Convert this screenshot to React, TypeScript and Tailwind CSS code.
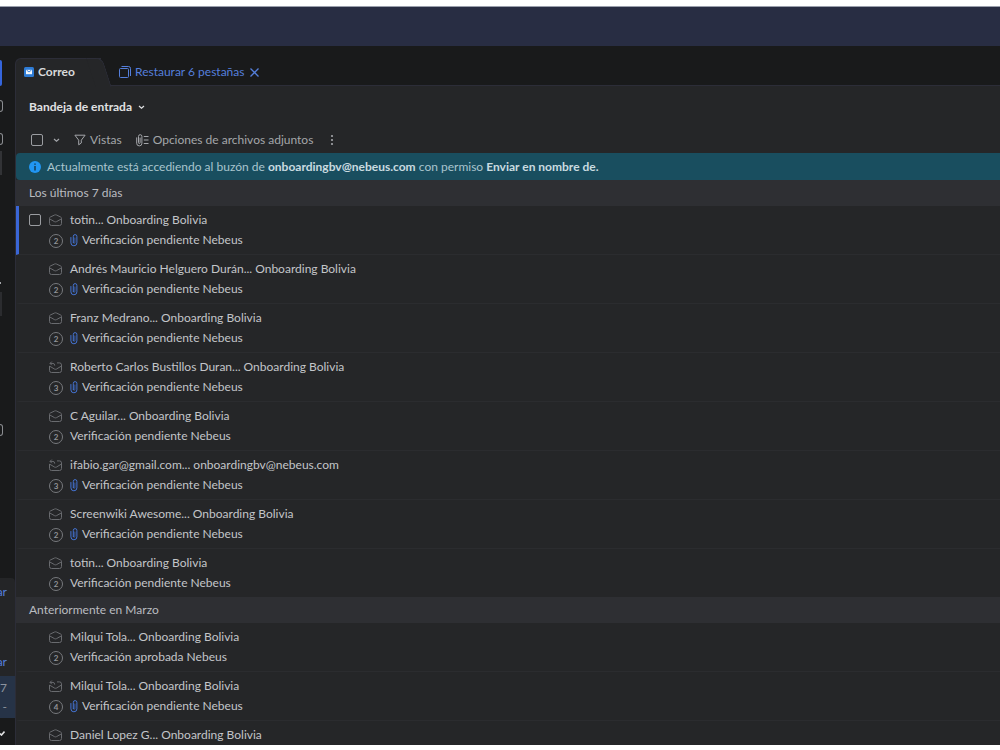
import { ReactNode } from 'react';
import clsx from 'clsx';

interface IThread {
   id: number;
   people: string;
   subject?: string;
   count?: number;
   replied?: boolean;
   attachment?: boolean;
   active?: boolean;
}

interface IThreadGroup {
   title: string;
   threads: IThread[];
}

const PENDING = 'Verificación pendiente Nebeus';

const groups: IThreadGroup[] = [
   {
      title: 'Los últimos 7 días',
      threads: [
         { id: 1, people: 'totin... Onboarding Bolivia', subject: PENDING, count: 2, attachment: true, active: true },
         { id: 2, people: 'Andrés Mauricio Helguero Durán... Onboarding Bolivia', subject: PENDING, count: 2, attachment: true },
         { id: 3, people: 'Franz Medrano... Onboarding Bolivia', subject: PENDING, count: 2, attachment: true },
         { id: 4, people: 'Roberto Carlos Bustillos Duran... Onboarding Bolivia', subject: PENDING, count: 3, attachment: true, replied: true },
         { id: 5, people: 'C Aguilar... Onboarding Bolivia', subject: PENDING, count: 2 },
         { id: 6, people: 'ifabio.gar@gmail.com... onboardingbv@nebeus.com', subject: PENDING, count: 3, attachment: true, replied: true },
         { id: 7, people: 'Screenwiki Awesome... Onboarding Bolivia', subject: PENDING, count: 2, attachment: true },
         { id: 8, people: 'totin... Onboarding Bolivia', subject: PENDING, count: 2 },
      ],
   },
   {
      title: 'Anteriormente en Marzo',
      threads: [
         { id: 9, people: 'Milqui Tola... Onboarding Bolivia', subject: 'Verificación aprobada Nebeus', count: 2 },
         { id: 10, people: 'Milqui Tola... Onboarding Bolivia', subject: PENDING, count: 4, attachment: true, replied: true },
         { id: 11, people: 'Daniel Lopez G... Onboarding Bolivia' },
      ],
   },
];

export default function App() {
   return (
      <div className="flex h-screen flex-col overflow-hidden bg-white pt-1.5 pb-[5px] font-['Lato',sans-serif] text-xs leading-5 text-[#c3c5c9]">
         <header className="h-10 shrink-0 border-t border-[#9a9fac] bg-[#282d43]" />
         <div className="flex min-h-0 flex-1 bg-[#191a1b]">
            <Sidebar />
            <div className="flex min-w-0 flex-1 flex-col">
               <TabBar />
               <main className="flex min-h-0 flex-1 flex-col border-l border-[#2c2d38] bg-[#252628]">
                  <div className="px-[13px] pt-[11px] pb-2.5">
                     <button className="flex items-center gap-1.5 font-bold text-[#e0e1e3]">
                        Bandeja de entrada
                        <ChevronIcon />
                     </button>
                  </div>
                  <Toolbar />
                  <p className="flex h-[27px] shrink-0 items-center gap-1.5 rounded-l-sm bg-[#194e5f] px-[13px] text-[#a9c5ce]">
                     <InfoIcon />
                     <span>
                        Actualmente está accediendo al buzón de{' '}
                        <b className="text-[#c9dbe0]">onboardingbv@nebeus.com</b>{' '}
                        con permiso{' '}
                        <b className="text-[#c9dbe0]">Enviar en nombre de.</b>
                     </span>
                  </p>
                  <div className="min-h-0 flex-1 overflow-hidden">
                     {groups.map((group) => (
                        <section key={group.title}>
                           <h2 className="bg-[#2e2f33] px-[13px] py-[3px] text-[#babcc0]">
                              {group.title}
                           </h2>
                           <ul className="divide-y divide-[#2b2c2f]">
                              {group.threads.map((thread) => (
                                 <ThreadRow key={thread.id} thread={thread} />
                              ))}
                           </ul>
                        </section>
                     ))}
                  </div>
               </main>
            </div>
         </div>
      </div>
   );
}

function TabBar() {
   return (
      <nav className="flex h-10 shrink-0 items-end border-b border-[#2c2d38]">
         <a
            href="#correo"
            className="relative -mb-px flex h-7 w-[86px] items-center gap-1 rounded-tl-md border-t border-l border-[#2c2d38] bg-[#252628] pb-0.5 pl-2 font-bold text-[#d9dadc] after:absolute after:-top-px after:-right-1.5 after:-bottom-px after:w-4 after:skew-x-[18deg] after:rounded-tr-md after:border-t after:border-r after:border-[#2c2d38] after:bg-[#252628] after:content-['']"
         >
            <MailTabIcon />
            Correo
         </a>
         <button className="ml-[18px] flex h-[26px] items-center gap-1 text-[#557fdb]">
            <TabsIcon />
            Restaurar 6 pestañas
         </button>
         <button aria-label="Cerrar" className="ml-1.5 flex h-[26px] items-center text-[#557fdb]">
            <svg width="9" height="9" viewBox="0 0 9 9" fill="none" stroke="currentColor" strokeWidth="1.3">
               <path d="M.5.5l8 8M8.5.5l-8 8" />
            </svg>
         </button>
      </nav>
   );
}

function Toolbar() {
   return (
      <div className="flex h-[26px] shrink-0 items-center pl-[15px] text-[#a4a6aa]">
         <Checkbox label="Seleccionar todo" />
         <button aria-label="Opciones de selección" className="ml-2.5">
            <ChevronIcon />
         </button>
         <button className="ml-3.5 flex items-center gap-1">
            <FilterIcon />
            Vistas
         </button>
         <button className="ml-3.5 flex items-center gap-1">
            <AttachmentOptionsIcon />
            Opciones de archivos adjuntos
         </button>
         <button aria-label="Más" className="ml-4">
            <svg width="6" height="12" viewBox="0 0 6 12" fill="currentColor">
               <circle cx="3" cy="2" r="1.1" />
               <circle cx="3" cy="6" r="1.1" />
               <circle cx="3" cy="10" r="1.1" />
            </svg>
         </button>
      </div>
   );
}

function ThreadRow({ thread }: { thread: IThread }) {
   return (
      <li
         className={clsx(
            'flex border-l-3 pt-1 pb-1',
            thread.active ? 'border-l-[#3a66d6]' : 'border-l-transparent'
         )}
      >
         <div className="flex h-5 w-[30px] items-center pl-2.5">
            {thread.active && <Checkbox label={thread.people} />}
         </div>
         <div className="grid grid-cols-[21px_1fr] items-center">
            <EnvelopeIcon replied={thread.replied} />
            <span>{thread.people}</span>
            {thread.subject && (
               <>
                  <span className="mt-px flex size-[14px] items-center justify-center rounded-full border border-[#77797d] text-[8px] leading-3 font-bold text-[#929498]">
                     {thread.count}
                  </span>
                  <span className="flex items-center gap-1">
                     {thread.attachment && <ClipIcon />}
                     {thread.subject}
                  </span>
               </>
            )}
         </div>
      </li>
   );
}

function Checkbox({ label }: { label: string }) {
   return (
      <input
         type="checkbox"
         aria-label={label}
         className="size-3 appearance-none rounded-xs border border-[#9b9da1]"
      />
   );
}

// Only the right edge of the sidebar is visible, the rest stays off screen
function Sidebar() {
   return (
      <aside className="flex w-[15px] shrink-0 flex-col overflow-hidden pt-3.5 text-[#557fdb]">
         <div className="h-[26px] w-0.5 rounded-r-sm bg-[#3565dc]" />
         <SidebarBox className="mt-3.5" />
         <SidebarBox className="mt-[21px]" />
         <div className="mt-1.5 h-6 w-0.5 bg-[#323336]" />
         <div className="mt-[107px] h-0.5 w-px bg-[#a4a6aa]" />
         <div className="mt-2 h-6 w-0.5 bg-[#2b2c2f]" />
         <SidebarBox className="mt-[108px]" />
         <div className="mt-auto rounded-tr-sm bg-[#242527]">
            <SidebarText className="h-[50px] pt-1">ar</SidebarText>
            <SidebarText className="h-12 pt-6">ar</SidebarText>
            <div className="h-[42px] bg-[#263347] text-[#8d949f]">
               <SidebarText className="h-[21px] pt-0.5">7</SidebarText>
               <SidebarText className="h-[21px]">-</SidebarText>
            </div>
         </div>
         <div className="h-[27px] shrink-0 pt-3 text-[#e0e1e3]">
            <svg width="5" height="6" viewBox="0 0 5 6" fill="none" stroke="currentColor" strokeWidth="1.6">
               <path d="M0 3.5L1.5 5L4.5 1.5" />
            </svg>
         </div>
      </aside>
   );
}

function SidebarBox({ className }: { className: string }) {
   return (
      <div
         className={clsx('h-3 w-[3px] shrink-0 rounded-r-sm border border-l-0 border-[#8b8d91]', className)}
      />
   );
}

function SidebarText({ children, className }: { children: ReactNode; className: string }) {
   return <div className={clsx('flex justify-end overflow-hidden pr-2', className)}>{children}</div>;
}

function EnvelopeIcon({ replied }: { replied?: boolean }) {
   return (
      <svg width="13" height="12" viewBox="0 0 13 12" fill="none" stroke="#696b6f" strokeLinejoin="round">
         {replied ? (
            <>
               <path d="M8 1.9h2.5a2 2 0 0 1 2 2v5.6a2 2 0 0 1-2 2h-8a2 2 0 0 1-2-2V5" />
               <path d="M1 2.4h3q1.7 0 1.7 2.2M2.8.6L1 2.4l1.8 1.8" />
               <path d="M.7 5.2l4.9 2.9q.9.4 1.8 0l4.8-2.9" />
            </>
         ) : (
            <>
               <path d="M.5 4.3Q.5 3.4 1.3 3L5.6 1q.9-.4 1.8 0l4.3 2q.8.4.8 1.3v5.2a2 2 0 0 1-2 2h-8a2 2 0 0 1-2-2z" />
               <path d="M.8 5l4.8 2.7q.9.4 1.8 0L12.2 5" />
            </>
         )}
      </svg>
   );
}

function ClipIcon() {
   return (
      <svg width="8" height="13" viewBox="0 0 8 13" fill="none" stroke="#4474d4" strokeLinecap="round">
         <path d="M.9 3.5v5.3a3 3 0 0 0 6 0V2.4a1.8 1.8 0 0 0-3.6 0v6.1" />
         <path d="M3.3 8.5a.8.8 0 0 0 1.6 0V4" strokeWidth=".7" />
      </svg>
   );
}

function AttachmentOptionsIcon() {
   return (
      <svg width="13" height="13" viewBox="0 0 13 13" fill="none" stroke="currentColor" strokeLinecap="round">
         <path d="M.7 3.8v5.5a2.6 2.6 0 0 0 5.2 0V2.4a1.7 1.7 0 0 0-3.4 0v6.3a.8.8 0 0 0 1.6 0V4" />
         <path d="M7.8 2.5h4.7M7.8 6h4.7M7.8 9.5h4.7" strokeLinecap="butt" />
      </svg>
   );
}

function FilterIcon() {
   return (
      <svg width="12" height="12" viewBox="0 0 12 12" fill="none" stroke="currentColor" strokeLinejoin="round">
         <path d="M.9 1.2h10.2L7.3 6.2V9L4.7 10.8V6.2z" />
      </svg>
   );
}

function ChevronIcon() {
   return (
      <svg width="7" height="5" viewBox="0 0 7 5" fill="none" stroke="currentColor" strokeWidth="1.2">
         <path d="M1 1l2.5 2.3L6 1" />
      </svg>
   );
}

function InfoIcon() {
   return (
      <svg width="12" height="12" viewBox="0 0 12 12">
         <circle cx="6" cy="6" r="6" fill="#2196f3" />
         <path d="M6 2.4v1.4M6 5v4.4" stroke="#123c55" strokeWidth="1.5" />
      </svg>
   );
}

function MailTabIcon() {
   return (
      <svg width="10" height="10" viewBox="0 0 10 10">
         <rect width="10" height="10" rx="1.5" fill="#2e7cd6" />
         <rect x="2" y="2.8" width="6" height="4.4" fill="#f1f6fd" />
         <path d="M2.5 3l2.5 2L7.5 3" fill="none" stroke="#2e7cd6" strokeWidth=".9" />
      </svg>
   );
}

function TabsIcon() {
   return (
      <svg width="12" height="12" viewBox="0 0 12 12" fill="none" stroke="currentColor">
         <rect x=".5" y="2.5" width="9" height="9" rx="1" />
         <path d="M2.5.5h7a2 2 0 0 1 2 2v7.5" />
      </svg>
   );
}
